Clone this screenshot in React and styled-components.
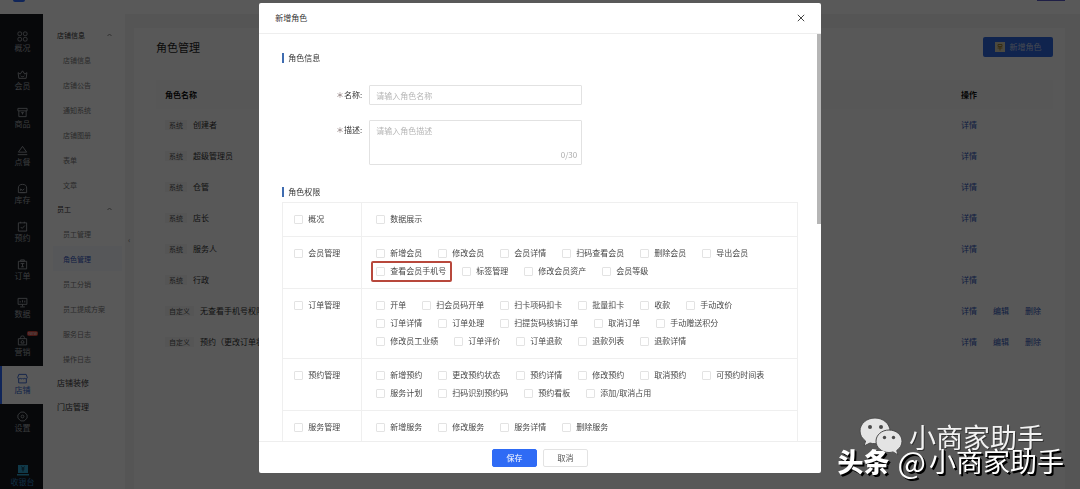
import React from "react";
import styled, { createGlobalStyle, css } from "styled-components";

const GlobalStyle = createGlobalStyle`
  * {
    box-sizing: border-box;
  }
  body {
    margin: 0;
    overflow: hidden;
    background: #f3f3f3;
    color: #333;
    font-family: "Noto Sans CJK SC", "Noto Sans", sans-serif;
    font-size: 8px;
    line-height: 10px;
  }
  a {
    text-decoration: none;
  }
  button, input, textarea {
    font: inherit;
  }
`;

/* ---------- data ---------- */

const mainNav = [
  { icon: "grid", label: "概况" },
  { icon: "crown", label: "会员" },
  { icon: "box", label: "商品" },
  { icon: "dish", label: "点餐" },
  { icon: "stock", label: "库存" },
  { icon: "check", label: "预约" },
  { icon: "order", label: "订单" },
  { icon: "data", label: "数据" },
  { icon: "market", label: "营销", badge: "NEW" },
  { icon: "shop", label: "店铺", active: true },
  { icon: "setting", label: "设置" },
];

const subNav = [
  {
    title: "店铺信息",
    items: ["店铺信息", "店铺公告", "通知系统", "店铺图册", "表单", "文章"],
  },
  {
    title: "员工",
    items: ["员工管理", "角色管理", "员工分销", "员工提成方案", "服务日志", "操作日志"],
  },
];

const roles = [
  { tag: "系统", name: "创建者" },
  { tag: "系统", name: "超级管理员" },
  { tag: "系统", name: "仓管" },
  { tag: "系统", name: "店长" },
  { tag: "系统", name: "服务人" },
  { tag: "系统", name: "行政" },
  { tag: "自定义", name: "无查看手机号权限", custom: true },
  { tag: "自定义", name: "预约（更改订单状态）", custom: true },
];

const permissions = [
  { group: "概况", lines: [["数据展示"]] },
  {
    group: "会员管理",
    lines: [
      ["新增会员", "修改会员", "会员详情", "扫码查看会员", "删除会员", "导出会员"],
      ["查看会员手机号", "标签管理", "修改会员资产", "会员等级"],
    ],
  },
  {
    group: "订单管理",
    lines: [
      ["开单", "扫会员码开单", "扫卡项码扣卡", "批量扣卡", "收款", "手动改价"],
      ["订单详情", "订单处理", "扫提货码核销订单", "取消订单", "手动赠送积分"],
      ["修改员工业绩", "订单评价", "订单退款", "退款列表", "退款详情"],
    ],
  },
  {
    group: "预约管理",
    lines: [
      ["新增预约", "更改预约状态", "预约详情", "修改预约", "取消预约", "可预约时间表"],
      ["服务计划", "扫码识别预约码", "预约看板", "添加/取消占用"],
    ],
  },
  {
    group: "服务管理",
    lines: [["新增服务", "修改服务", "服务详情", "删除服务"]],
  },
];

const highlighted = "查看会员手机号";

/* ---------- icons ---------- */

const icons = {
  grid: (
    <>
      <rect x="1" y="1" width="4" height="4" rx="1.5" />
      <rect x="7" y="1" width="4" height="4" rx="1.5" />
      <rect x="1" y="7" width="4" height="4" rx="1.5" />
      <rect x="7" y="7" width="4" height="4" rx="1.5" />
    </>
  ),
  crown: <path d="M1.2 4l2.3 1.6L6 2l2.500 3.600L10.800 4 10 10.200H2zM4 7.500c1 1.200 3 1.200 4 0" />,
  box: <path d="M1 1.500h10v2.700H1zM2 4.200v6.300h8V4.200M4.500 6.200h3M6 6.200v2" />,
  dish: <path d="M6 1.500L10.500 7.800H1.500zM.800 10.500h10.400" />,
  stock: <path d="M1.500 10.500V5.500a4.500 4 0 0 1 9 0v5zM4 8.500V6.500l2 1.500 2-1.500M3.500 10.500h5" />,
  check: <path d="M1.500 2h9v9h-9zM4 .800V2.500M8 .800V2.500M4 6.500l1.600 1.600L8.500 5" />,
  order: <path d="M1.500 2.500h9v8.300h-9zM4 1h4v1.500H4zM4 5h4M6 5v3.500M4.500 8.500h3" />,
  data: <path d="M1.200 1.500h9.600v6.500H1.200zM6 8v2.200M3.500 10.800h5M3.500 6V4.500M6 6V3.500M8.500 6V4" />,
  market: <path d="M1.500 4h9v6.800h-9zM4 4V2.500a2 1.500 0 0 1 4 0V4M4.500 8.800V7L6 6l1.500 1v1.800z" />,
  shop: <path d="M2 1.500h8l1.200 3.500c0 1.500-2 1.700-2.600.500-.600 1.200-2 1.200-2.600 0-.600 1.200-2 1.200-2.600 0C2.800 6.700.800 6.500.800 5zM1.800 6.500v4.300h8.400V6.500" />,
  setting: (
    <>
      <path d="M4.200 1.200h3.600l3.200 3v3.600l-3.200 3H4.200L1 7.800V4.200z" />
      <circle cx="6" cy="6" r="1.500" />
    </>
  ),
};

const NavIcon = ({ name }) => (
  <svg width="11" height="11" viewBox="0 0 12 12" fill="none" stroke="currentColor" aria-hidden="true">
    {icons[name]}
  </svg>
);

const CashierIcon = () => (
  <svg width="12" height="11" viewBox="0 0 12 11" aria-hidden="true">
    <rect x="1" y="0" width="10" height="8" fill="#2fa4d0" />
    <path d="M4.500 1.500L6 3.500l1.500-2M4.500 4h3M6 3.500v3" stroke="#14394f" fill="none" />
    <rect x="0" y="9" width="12" height="1.500" fill="#2fa4d0" />
  </svg>
);

const Caret = () => (
  <svg width="5" height="4" viewBox="0 0 5 4" fill="none" stroke="#888" aria-hidden="true">
    <path d="M.5 3l2-2 2 2" />
  </svg>
);

const CloseIcon = () => (
  <svg width="8" height="8" viewBox="0 0 8 8" fill="none" stroke="#444" aria-hidden="true">
    <path d="M.8.8l6.400 6.400M7.200.8L.8 7.200" />
  </svg>
);

const ChatIcon = () => (
  <svg width="46" height="40" viewBox="0 0 46 40" aria-hidden="true">
    <g fill="#e4e4e4" stroke="#4a4a4a">
      <path d="M16 1C7.500 1 1 6.800 1 14c0 4.200 2.200 7.600 5.600 10L5 29l6-3c1.600.500 3.300.700 5 .700 8.500 0 15-5.700 15-12.700S24.500 1 16 1z" />
      <path d="M30 13c-7.300 0-13 5-13 11.200S22.700 35.500 30 35.500c1.400 0 2.800-.200 4-.600l5 3-1.300-4.400c3.300-2.200 5.300-5.500 5.300-9.300C43 18 37.300 13 30 13z" />
    </g>
    <g fill="#4a4a4a">
      <circle cx="11" cy="10" r="2" />
      <circle cx="22" cy="10" r="2" />
      <circle cx="25.500" cy="20.500" r="1.700" />
      <circle cx="34.500" cy="20.500" r="1.700" />
    </g>
  </svg>
);

/* ---------- page behind the dialog ---------- */

const Page = styled.div`
  display: flex;
  flex-direction: column;
  height: 100vh;
`;

const TopBar = styled.header`
  display: flex;
  align-items: flex-start;
  flex: none;
  height: 14px;
  padding: 0 15px 0 13px;
  background: #fff;
`;

const Logo = styled.div`
  width: 12px;
  height: 2px;
  background: #2f6bff;
  border-radius: 0 0 4px 4px;
`;

const Account = styled.div`
  width: 28px;
  height: 1px;
  margin-left: auto;
  background: #5a5ac8;
`;

const Columns = styled.div`
  display: flex;
  flex: 1;
  min-height: 0;
`;

const SideBar = styled.nav`
  display: flex;
  flex-direction: column;
  flex: none;
  width: 43px;
  padding: 10px 0 0;
  background: #14181f;
`;

const SideLink = styled.a`
  position: relative;
  display: flex;
  flex: none;
  flex-direction: column;
  align-items: center;
  gap: 1px;
  height: 38px;
  padding-top: 7px;
  color: #a4a8ae;
  border-left: 2px solid transparent;

  ${({ $active }) =>
    $active &&
    css`
      color: #2f5fd0;
      background: #fff;
      border-color: #2f6bff;
    `}
`;

const NewBadge = styled.span`
  position: absolute;
  top: 3px;
  right: 5px;
  padding: 0 1px;
  border-radius: 2px;
  background: #d8453a;
  color: #fff;
  font-size: 4px;
  line-height: 5px;
`;

const CashierLink = styled(SideLink)`
  height: 24px;
  padding-top: 0;
  margin-top: auto;
  color: #2f86c4;
`;

const SubBar = styled.nav`
  flex: none;
  width: 82px;
  padding: 9px 3px 0 10px;
  background: #fff;
  font-size: 7px;
`;

const SubTitle = styled.a`
  display: flex;
  align-items: center;
  justify-content: space-between;
  height: 24px;
  padding: 0 10px 0 4px;
  color: #333;
  font-size: ${({ $large }) => ($large ? 8 : 7)}px;
`;

const SubLink = styled.a`
  display: flex;
  align-items: center;
  height: 25px;
  padding-left: 10px;
  color: ${({ $active }) => ($active ? "#2f55c0" : "#7a7a7a")};
  background: ${({ $active }) => ($active ? "#f7f9ff" : "none")};
`;

const Main = styled.main`
  position: relative;
  flex: 1;
  padding: 14px 15px 0 9px;
`;

const CollapseHandle = styled.span`
  position: absolute;
  top: 221px;
  left: 3px;
  color: #777;
`;

const Card = styled.section`
  height: 100%;
  padding: 9px 12px 0 22px;
  background: #fcfcfc;
`;

const CardHead = styled.div`
  display: flex;
  align-items: center;
  justify-content: space-between;
  height: 20px;
  margin-bottom: 23px;
`;

const CardTitle = styled.h1`
  margin: 0;
  color: #222;
  font-size: 11px;
  font-weight: 400;
  line-height: 20px;
`;

const AddButton = styled.button`
  display: flex;
  align-items: center;
  justify-content: center;
  gap: 5px;
  width: 70px;
  height: 20px;
  padding: 0;
  border: 0;
  border-radius: 2px;
  background: #2f68e0;
  color: #c4cfe8;
`;

const RoleTable = styled.table`
  width: 100%;
  border-collapse: collapse;
  table-layout: fixed;

  th {
    height: 29px;
    padding: 0 0 0 9px;
    background: #fafafa;
    color: #111;
    text-align: left;
  }
  td {
    height: 31px;
    padding: 0 0 0 9px;
  }
  th:last-child,
  td:last-child {
    width: 101px;
  }
`;

const RoleName = styled.span`
  display: flex;
  align-items: center;
  gap: 6px;
`;

const Tag = styled.span`
  padding: 0 4px;
  background: #f3f3f3;
  color: #555;
  font-size: 7px;
`;

const Actions = styled.span`
  display: flex;
  gap: 16px;

  a {
    color: #3056b8;
  }
`;

/* ---------- dialog ---------- */

const Mask = styled.div`
  position: fixed;
  inset: 0;
  display: flex;
  justify-content: center;
  padding: 3px 0 16px;
  background: rgba(0, 0, 0, 0.65);
`;

const Dialog = styled.div`
  display: flex;
  flex-direction: column;
  width: 52%;
  background: #fff;
  border-radius: 2px;
`;

const DialogHead = styled.div`
  display: flex;
  align-items: center;
  justify-content: space-between;
  flex: none;
  height: 31px;
  padding: 0 16px;
  border-bottom: 1px solid #eee;

  h2 {
    margin: 0;
    font-size: 8px;
    font-weight: 400;
  }
  button {
    display: flex;
    padding: 0;
    border: 0;
    background: none;
  }
`;

const DialogBody = styled.div`
  position: relative;
  flex: 1;
  min-height: 0;
  padding: 19px 23px 0;
  overflow: hidden;
`;

const ScrollThumb = styled.div`
  position: absolute;
  top: 0;
  right: 0;
  width: 4px;
  height: 190px;
  background: #b5b5b5;
`;

const DialogFoot = styled.div`
  display: flex;
  justify-content: center;
  flex: none;
  gap: 6px;
  height: 32px;
  padding-top: 7px;
  border-top: 1px solid #eee;
`;

const FootButton = styled.button`
  width: 45px;
  height: 18px;
  padding: 0;
  border: 1px solid ${({ $primary }) => ($primary ? "#2f6bf5" : "#e3e3e3")};
  border-radius: 2px;
  background: ${({ $primary }) => ($primary ? "#2f6bf5" : "#fff")};
  color: ${({ $primary }) => ($primary ? "#fff" : "#555")};
`;

const SectionTitle = styled.h3`
  margin: 0;
  padding-left: 4px;
  border-left: 2px solid #3f6cb0;
  font-size: 8px;
  font-weight: 400;
`;

const Form = styled.form`
  display: grid;
  grid-template-columns: 81px 213px;
  gap: 15px 6px;
  margin: 22px 0;
`;

const FieldLabel = styled.label`
  padding-right: 1px;
  line-height: 20px;
  text-align: right;

  span {
    color: #877;
  }
`;

const fieldStyle = css`
  display: block;
  width: 100%;
  padding: 0 6px;
  border: 1px solid #e2e2e2;
  border-radius: 1px;
  background: #fff;
  outline: none;

  &::placeholder {
    color: #b5b5b5;
  }
`;

const TextInput = styled.input`
  ${fieldStyle}
  height: 20px;
`;

const TextArea = styled.textarea`
  ${fieldStyle}
  height: 45px;
  padding-top: 5px;
  resize: none;
`;

const AreaWrap = styled.div`
  position: relative;
`;

const Counter = styled.span`
  position: absolute;
  right: 5px;
  bottom: 5px;
  color: #aaa;
`;

const PermTable = styled.div`
  margin-top: 5px;
  border: 1px solid #efefef;
  border-top: 0;
`;

const PermRow = styled.div`
  display: grid;
  grid-template-columns: 79px 1fr;
  border-top: 1px solid #efefef;
`;

const PermCell = styled.div`
  padding: 7px 0 8px ${({ $head }) => ($head ? 11 : 14)}px;
  border-right: ${({ $head }) => ($head ? "1px solid #efefef" : "0")};
`;

const PermLine = styled.div`
  display: flex;
  gap: 16px;
`;

const CheckLabel = styled.label`
  position: relative;
  display: flex;
  align-items: center;
  gap: 5px;
  height: 18px;
  color: #484848;
  white-space: nowrap;

  input {
    appearance: none;
    width: 9px;
    height: 9px;
    margin: 0;
    border: 1px solid #e3e3e3;
    border-radius: 1px;
    background: #fff;
  }

  ${({ $marked }) =>
    $marked &&
    css`
      &::after {
        content: "";
        position: absolute;
        inset: -1px -6px -2px -5px;
        border: 2px solid #b8483c;
        border-radius: 2px;
      }
    `}
`;

/* ---------- watermark ---------- */

const Watermark = styled.div`
  position: fixed;
  right: 16px;
  bottom: 16px;
  display: flex;
  flex-direction: column;
  align-items: flex-end;
  color: #fff;
  font-size: 27px;
  line-height: 24px;
  white-space: nowrap;
`;

const WatermarkTop = styled.div`
  position: relative;
  margin-right: 20px;
  color: #f2f2f2;
  text-shadow: 1px 1px 0 #333;

  svg {
    position: absolute;
    top: -8px;
    right: 139px;
  }
`;

const WatermarkBottom = styled.div`
  display: flex;
  position: relative;
  text-shadow: 1px 1px 0 #000, 2px 2px 0 #000;

  b {
    margin-right: 8px;
    font-size: 26px;
    font-weight: 900;
  }
`;

const AtSign = styled.span`
  margin-right: 3px;
  font-size: 30px;
`;

const Check = ({ label, marked }) => (
  <CheckLabel $marked={marked}>
    <input type="checkbox" />
    {label}
  </CheckLabel>
);

const RoleDialog = () => (
  <Mask>
    <Dialog role="dialog" aria-labelledby="dialog-title">
      <DialogHead>
        <h2 id="dialog-title">新增角色</h2>
        <button type="button" aria-label="关闭">
          <CloseIcon />
        </button>
      </DialogHead>
      <DialogBody>
        <SectionTitle>角色信息</SectionTitle>
        <Form>
          <FieldLabel htmlFor="role-name">
            <span>＊</span>名称:
          </FieldLabel>
          <TextInput id="role-name" placeholder="请输入角色名称" />
          <FieldLabel htmlFor="role-desc">
            <span>＊</span>描述:
          </FieldLabel>
          <AreaWrap>
            <TextArea id="role-desc" placeholder="请输入角色描述" />
            <Counter>0/30</Counter>
          </AreaWrap>
        </Form>
        <SectionTitle>角色权限</SectionTitle>
        <PermTable>
          {permissions.map(({ group, lines }) => (
            <PermRow key={group}>
              <PermCell $head>
                <Check label={group} />
              </PermCell>
              <PermCell>
                {lines.map((line) => (
                  <PermLine key={line[0]}>
                    {line.map((name) => (
                      <Check key={name} label={name} marked={name === highlighted} />
                    ))}
                  </PermLine>
                ))}
              </PermCell>
            </PermRow>
          ))}
        </PermTable>
        <ScrollThumb />
      </DialogBody>
      <DialogFoot>
        <FootButton type="button" $primary>
          保存
        </FootButton>
        <FootButton type="button">取消</FootButton>
      </DialogFoot>
    </Dialog>
  </Mask>
);

const App = () => (
  <>
    <GlobalStyle />
    <Page>
      <TopBar>
        <Logo />
        <Account />
      </TopBar>
      <Columns>
        <SideBar>
          {mainNav.map(({ icon, label, badge, active }) => (
            <SideLink key={label} href="#" $active={active}>
              <NavIcon name={icon} />
              {label}
              {badge && <NewBadge>{badge}</NewBadge>}
            </SideLink>
          ))}
          <CashierLink href="#">
            <CashierIcon />
            收银台
          </CashierLink>
        </SideBar>
        <SubBar>
          {subNav.map(({ title, items }) => (
            <div key={title}>
              <SubTitle href="#">
                {title}
                <Caret />
              </SubTitle>
              {items.map((item) => (
                <SubLink key={item} href="#" $active={item === "角色管理"}>
                  {item}
                </SubLink>
              ))}
            </div>
          ))}
          <SubTitle href="#" $large>
            店铺装修
          </SubTitle>
          <SubTitle href="#" $large>
            门店管理
          </SubTitle>
        </SubBar>
        <Main>
          <CollapseHandle>‹</CollapseHandle>
          <Card>
            <CardHead>
              <CardTitle>角色管理</CardTitle>
              <AddButton type="button">
                <svg width="10" height="10" viewBox="0 0 10 10" aria-hidden="true">
                  <rect width="10" height="10" fill="#d8d2b8" />
                  <path d="M3 2.500h4v2H3zM2.500 6h5M5 4.500v4" stroke="#a08030" fill="none" />
                </svg>
                新增角色
              </AddButton>
            </CardHead>
            <RoleTable>
              <thead>
                <tr>
                  <th>角色名称</th>
                  <th>操作</th>
                </tr>
              </thead>
              <tbody>
                {roles.map(({ tag, name, custom }) => (
                  <tr key={name}>
                    <td>
                      <RoleName>
                        <Tag>{tag}</Tag>
                        {name}
                      </RoleName>
                    </td>
                    <td>
                      <Actions>
                        <a href="#">详情</a>
                        {custom && <a href="#">编辑</a>}
                        {custom && <a href="#">删除</a>}
                      </Actions>
                    </td>
                  </tr>
                ))}
              </tbody>
            </RoleTable>
          </Card>
        </Main>
      </Columns>
    </Page>
    <RoleDialog />
    <Watermark>
      <WatermarkTop>
        <ChatIcon />
        小商家助手
      </WatermarkTop>
      <WatermarkBottom>
        <b>头条</b>
        <AtSign>@</AtSign>
        <span>小商家助手</span>
      </WatermarkBottom>
    </Watermark>
  </>
);

export default App;
